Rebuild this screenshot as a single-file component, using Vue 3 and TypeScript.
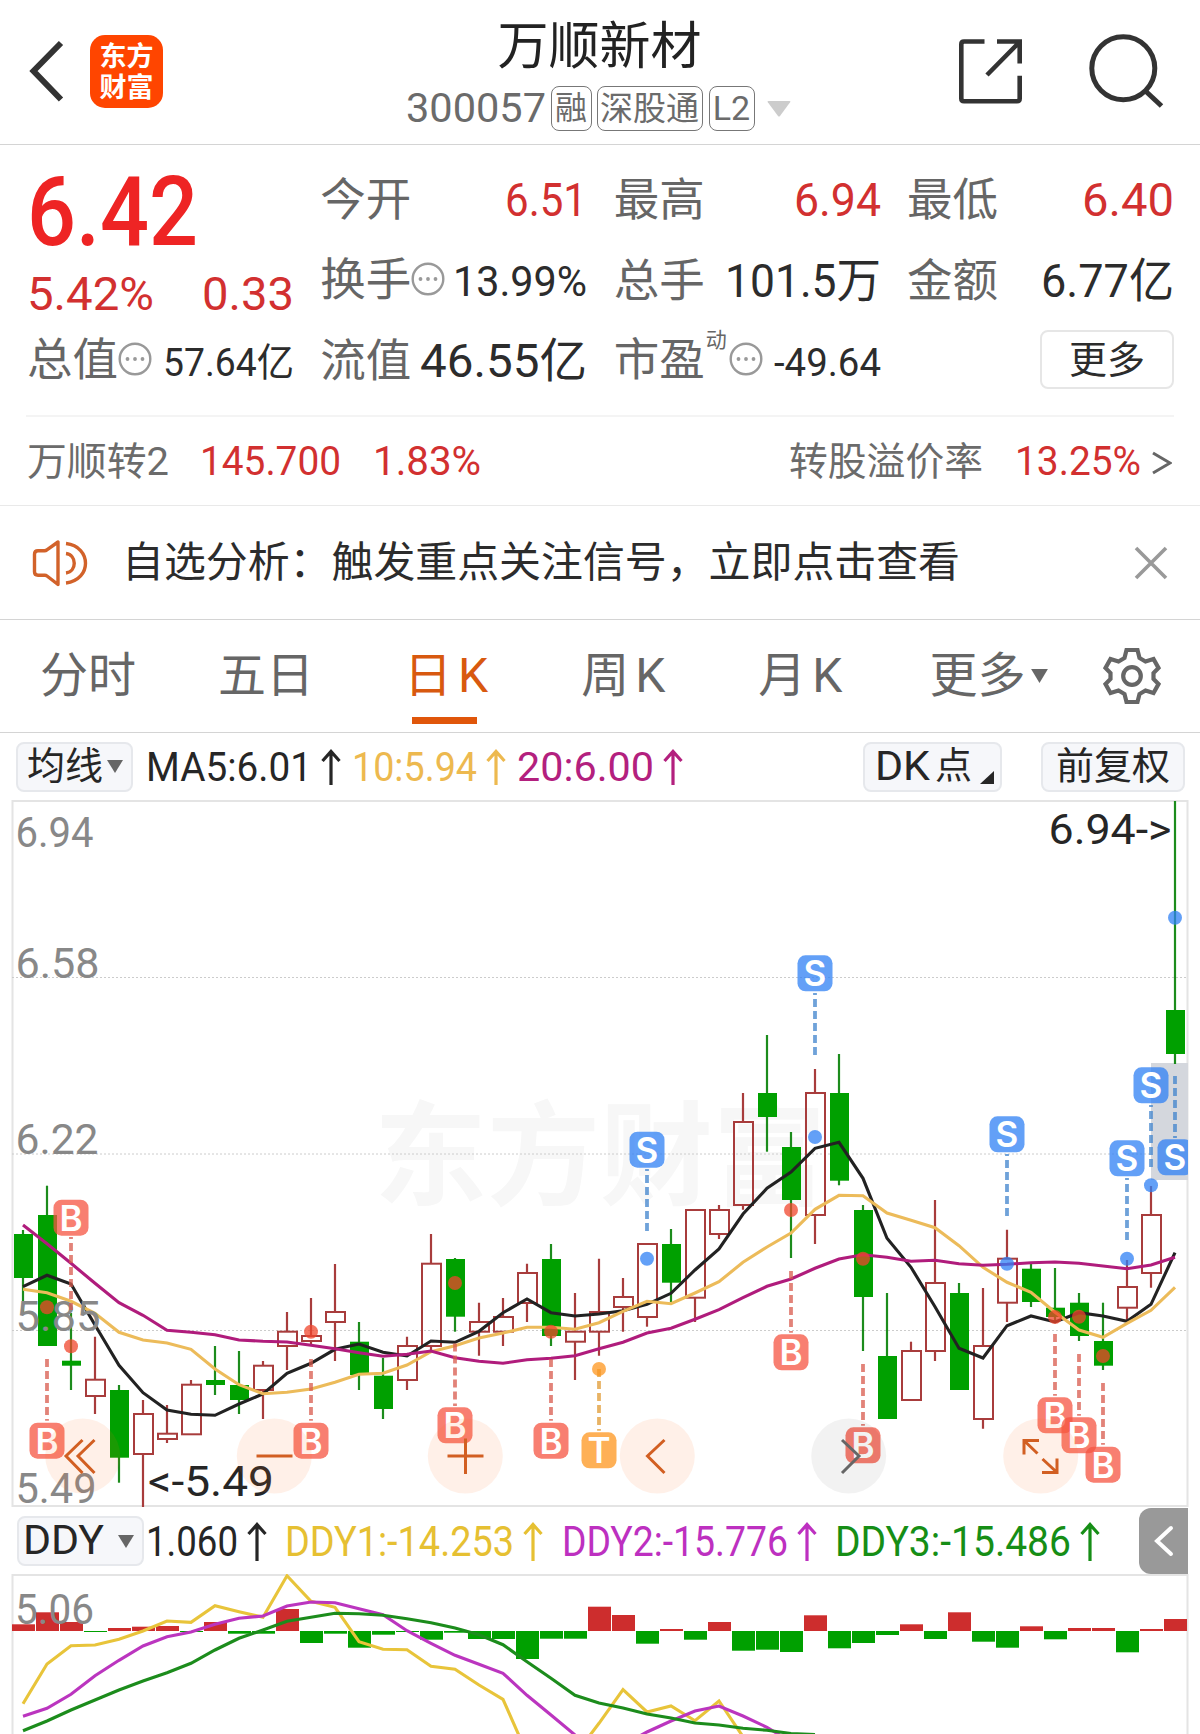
<script setup lang="ts">
import type { Directive } from 'vue'

/* Condenses or widens a run of text horizontally to a fixed advance width. */
const vFit: Directive<HTMLElement, number> = {
  mounted(el, { value }) {
    const natural = el.getBoundingClientRect().width
    if (!natural) return
    el.style.transformOrigin = '0 50%'
    el.style.transform = `scaleX(${value / natural})`
    el.style.marginRight = `${value - natural}px`
  },
}

type Side = 'up' | 'down'
interface Candle { side: Side; high: number; top: number; bottom: number; low: number; x: number }
interface Marker { kind: 'B' | 'S' | 'T'; i: number; y: number; from: number; to: number; dot: number }

const px = (i: number) => 23 + i * 24

const raw: [Side, number, number, number, number][] = [
  ['down', 1230, 1234, 1278, 1313], ['down', 1185.7, 1215, 1346, 1346], ['down', 1313, 1360.7, 1365.7, 1390],
  ['up', 1336.7, 1379.7, 1396, 1414], ['down', 1385, 1390, 1457.7, 1482.7], ['up', 1400, 1414, 1454, 1507],
  ['up', 1405, 1433.7, 1439, 1443], ['up', 1380, 1384.7, 1434.3, 1434.3], ['down', 1346, 1380, 1385, 1395],
  ['down', 1351, 1385, 1400, 1414], ['up', 1361, 1365.7, 1390, 1419], ['up', 1312, 1331.7, 1346, 1370],
  ['up', 1298, 1336, 1341, 1344], ['up', 1264, 1312, 1322, 1361], ['down', 1322, 1341.7, 1375, 1390],
  ['down', 1358, 1375.7, 1409, 1419], ['up', 1336.7, 1346, 1380, 1390], ['up', 1234, 1263.7, 1346, 1351],
  ['down', 1258, 1259, 1316.7, 1331.7], ['up', 1302.7, 1322, 1331.7, 1355.7], ['up', 1298, 1317, 1331.7, 1346],
  ['up', 1263.7, 1273, 1303, 1322], ['down', 1244, 1259, 1336, 1346], ['up', 1293, 1331.7, 1341.7, 1380],
  ['up', 1258.7, 1312, 1331.7, 1355.7], ['up', 1278, 1297, 1307, 1331.7], ['up', 1244, 1244, 1317, 1326.7],
  ['down', 1229, 1244, 1282.7, 1302], ['up', 1210, 1210, 1297.7, 1322], ['up', 1205, 1210, 1234, 1239],
  ['up', 1093, 1122, 1205, 1209.7], ['down', 1035, 1093, 1117, 1151.7], ['down', 1132, 1147, 1200, 1258],
  ['up', 1069, 1093, 1215, 1244], ['down', 1054, 1093, 1180.7, 1185.3], ['down', 1205, 1210, 1297, 1351],
  ['down', 1293, 1356, 1419, 1419], ['up', 1341.7, 1351, 1400, 1400], ['up', 1200, 1283, 1351, 1361],
  ['down', 1283, 1293, 1390, 1390], ['up', 1288, 1346, 1419, 1428.7], ['up', 1229.7, 1258.7, 1302.7, 1322],
  ['down', 1263, 1268.7, 1302, 1307], ['down', 1268, 1307.7, 1317, 1323], ['down', 1293, 1302.7, 1336, 1341],
  ['down', 1302.7, 1341, 1365.7, 1370], ['up', 1260, 1287, 1307.7, 1320], ['up', 1186, 1215, 1273, 1287.7],
  ['down', 801, 1010, 1054, 1064],
]
const candles: Candle[] = raw.map(([side, high, top, bottom, low], i) => ({ side, high, top, bottom, low, x: px(i) }))

const line = (ys: number[], start = 0) => ys.map((y, i) => `${px(i + start)},${y}`).join(' ')

const ma5 = line([1286.7, 1275.3, 1284, 1325, 1365.3, 1392.7, 1410, 1414.3, 1415.3, 1404, 1394, 1373.3, 1363.3, 1349.3, 1344, 1352.3, 1356, 1341, 1342.3, 1331.3, 1312.7, 1299, 1312.7, 1316, 1314, 1310.7, 1304.3, 1293.3, 1270, 1249, 1214, 1188.3, 1172, 1148.3, 1142.3, 1178.3, 1238.3, 1267.3, 1306.7, 1348.3, 1358, 1325.7, 1316, 1322, 1312.7, 1316, 1321.3, 1304.3, 1252.7])
const ma10 = line([1289.3, 1292.7, 1301.3, 1313.3, 1332.3, 1340, 1343, 1349.3, 1369, 1384.7, 1393.7, 1392.3, 1389, 1382.3, 1374.3, 1373.3, 1365, 1351.7, 1345.7, 1338, 1333, 1327.3, 1327.3, 1329.3, 1322.7, 1311.3, 1301.3, 1303.7, 1293, 1281.7, 1262.3, 1247, 1233, 1209.3, 1195.3, 1195.7, 1213, 1220.3, 1227.7, 1245.7, 1267.3, 1282.3, 1292.3, 1312.3, 1330, 1337.3, 1323.3, 1310.3, 1287.3])
const ma20 = line([1225, 1243.7, 1263.3, 1283.3, 1302.7, 1315.3, 1330.3, 1332.3, 1334.7, 1340, 1341.3, 1342, 1345.3, 1348.7, 1352.7, 1356.3, 1354.3, 1351, 1357.7, 1361.3, 1363.3, 1359.7, 1358.3, 1355.7, 1348.7, 1342.3, 1333, 1328.3, 1319.3, 1309.7, 1297.7, 1286.3, 1279, 1268.3, 1259, 1254.7, 1257.3, 1261.3, 1260.3, 1263.7, 1265.3, 1264.3, 1262.7, 1262, 1263.3, 1266, 1268.7, 1265, 1257.3])

const markers: Marker[] = [
  { kind: 'B', i: 2, y: 1217.7, from: 1237, to: 1310, dot: 1346.3 },
  { kind: 'B', i: 1, y: 1440.7, from: 1359, to: 1420.7, dot: 1307.3 },
  { kind: 'B', i: 12, y: 1440.7, from: 1359, to: 1420.7, dot: 1331.7 },
  { kind: 'B', i: 18, y: 1425.3, from: 1343.5, to: 1406, dot: 1283 },
  { kind: 'B', i: 22, y: 1440.7, from: 1359, to: 1420.7, dot: 1331.7 },
  { kind: 'T', i: 24, y: 1450.3, from: 1369, to: 1430.7, dot: 1369 },
  { kind: 'S', i: 26, y: 1149.7, from: 1169, to: 1231, dot: 1258.7 },
  { kind: 'B', i: 32, y: 1352.3, from: 1271, to: 1332.7, dot: 1210 },
  { kind: 'S', i: 33, y: 973.3, from: 993, to: 1055, dot: 1137 },
  { kind: 'B', i: 35, y: 1445.3, from: 1364, to: 1425.7, dot: 1258.7 },
  { kind: 'S', i: 41, y: 1134.3, from: 1154, to: 1216, dot: 1263.7 },
  { kind: 'B', i: 43, y: 1415.3, from: 1334, to: 1395.7, dot: 1317 },
  { kind: 'B', i: 44, y: 1435.3, from: 1354, to: 1415.7, dot: 1316.7 },
  { kind: 'B', i: 45, y: 1464.7, from: 1383, to: 1444.7, dot: 1356 },
  { kind: 'S', i: 46, y: 1158.3, from: 1178, to: 1240, dot: 1258.7 },
  { kind: 'S', i: 47, y: 1085.3, from: 1105, to: 1167, dot: 1185.3 },
  { kind: 'S', i: 48, y: 1157.3, from: 1076, to: 1138, dot: 917.7 },
]
/* Dashes are laid out starting from the candle side for markers below it, and from the badge for those above. */
const dashOffset = (m: Marker) => (m.y < m.from ? 6 : 0)

const axis = [
  { t: '6.94', y: 846.5, w: 78 }, { t: '6.58', y: 978, w: 84 }, { t: '6.22', y: 1153.5, w: 83 },
  { t: '5.85', y: 1331, w: 85 }, { t: '5.49', y: 1502.5, w: 81 },
]
const rounds = [
  { x: 82.7, off: false, d: 'M82.5 1440 66 1456l16.500 17M94.500 1440 78 1456l16.500 17' },
  { x: 274.3, off: false, d: 'M256.500 1456h36' },
  { x: 465.3, off: false, d: 'M447.500 1456h36M465.500 1438.500v35.500' },
  { x: 657.3, off: false, d: 'M664.500 1440 647.500 1456l17 17' },
  { x: 848.7, off: true, d: 'M842 1440l17 16-17 17' },
  { x: 1040.7, off: false, d: 'M1039 1440.500h-15v14M1024.500 1441l13 12.500M1042 1472.500h15v-14M1056.500 1472l-14-13' },
]

const zero = 1631
const ends = [1624.3, 1612.3, 1622, 1632, 1628, 1626.7, 1626, 1632, 1622, 1633.7, 1633.7, 1609, 1643, 1633.7, 1647.7, 1634.7, 1632, 1639.7, 1632.7, 1639, 1639, 1659, 1638.7, 1638.7, 1606.7, 1615, 1643.7, 1629, 1639.7, 1622, 1650.7, 1649.7, 1652, 1615.3, 1648.3, 1643, 1635, 1624.3, 1639, 1612.3, 1641.7, 1647.7, 1626.3, 1639.3, 1628, 1628, 1652.3, 1629, 1619]
const bars = ends.map((e, i) => ({ x: 12 + i * 24, y: Math.min(e, zero), h: Math.abs(e - zero), red: e < zero }))

const ddy1a = line([1703.7, 1664, 1645.7, 1645, 1639.3, 1631, 1621, 1622.3, 1605.7, 1611.7, 1617.3, 1575.8, 1601.3, 1607.3, 1641.7, 1649.3, 1649.7, 1666.3, 1669.3, 1685, 1699.3, 1753.7])
const ddy1b = line([1755, 1723.3, 1689.7, 1712, 1706, 1720.7, 1701, 1736.7], 23)
const ddy2a = line([1716.3, 1708.3, 1694.3, 1675.7, 1660.3, 1646, 1636.7, 1632, 1624.3, 1618.3, 1616, 1606, 1602, 1602.7, 1608.7, 1614.7, 1630.7, 1643.3, 1655.3, 1664.3, 1673.3, 1695.3, 1715, 1735])
const ddy2b = line([1745, 1732, 1721, 1711, 1706, 1716, 1727.3, 1742], 25)
const ddy3 = line([1730.7, 1721, 1710, 1700, 1690, 1681, 1672.7, 1663.3, 1650, 1638.3, 1630, 1621.3, 1617.3, 1613.3, 1613.7, 1615.3, 1618.7, 1622.7, 1628, 1634.7, 1644.7, 1661.7, 1678.3, 1695.3, 1703, 1708, 1714, 1718, 1723, 1725, 1728.3, 1730.3, 1733.5, 1734.5])
</script>

<template>
  <main class="app">
    <header class="head">
      <div class="head-left">
        <svg class="back" width="40" height="64" viewBox="0 0 40 64"><path d="M35 4 7.500 32 35 60.500" /></svg>
        <div class="logo"><span>东方</span><span>财富</span></div>
      </div>
      <div class="head-mid">
        <h1>万顺新材</h1>
        <div class="code-row">
          <span v-fit="140" class="code">300057</span>
          <span class="badge b1">融</span>
          <span class="badge b3">深股通</span>
          <span class="badge b2">L2</span>
          <svg class="caret" width="24" height="16" viewBox="0 0 24 16"><path d="M1.500 0h21q1.500 0 .6 1.300L13 15q-1 1.200-2 0L.8 1.300Q0 0 1.500 0z" fill="#ccc" /></svg>
        </div>
      </div>
      <div class="head-right">
        <svg width="66" height="66" viewBox="958 39 66 66" class="ico"><path d="M984.500 42.500H964q-2.700 0-2.700 2.700v54.300q0 2.700 2.700 2.700h53q2.700 0 2.700-2.700V76.700M997 42.500h22.700v22M987 76l32.500-33" /></svg>
        <svg width="78" height="78" viewBox="1088 32 78 78" class="ico"><circle cx="1123.300" cy="68.300" r="31.500" /><path d="M1145.500 91l16 15" /></svg>
      </div>
    </header>

    <section class="quote">
      <div class="col">
        <div v-fit="171" class="price">6.42</div>
        <div class="cell chg"><span v-fit="127" class="v red">5.42%</span><span v-fit="92" class="v red">0.33</span></div>
        <div class="cell"><span class="lab">总值</span><svg class="dots" width="34" height="34" viewBox="0 0 34 34"><circle cx="17" cy="17" r="15.300" /><path d="M9.500 17h.01M17 17h.01M24.500 17h.01" /></svg><span v-fit="131" class="v sm">57.64亿</span></div>
      </div>
      <div class="col pad">
        <div class="cell"><span class="lab">今开</span><span v-fit="82" class="v red">6.51</span></div>
        <div class="cell"><span class="lab">换手</span><svg class="dots" width="34" height="34" viewBox="0 0 34 34"><circle cx="17" cy="17" r="15.300" /><path d="M9.500 17h.01M17 17h.01M24.500 17h.01" /></svg><span v-fit="134" class="v md wide">13.99%</span></div>
        <div class="cell"><span class="lab">流值</span><span v-fit="167" class="v">46.55亿</span></div>
      </div>
      <div class="col pad">
        <div class="cell"><span class="lab">最高</span><span v-fit="87" class="v red">6.94</span></div>
        <div class="cell"><span class="lab">总手</span><span v-fit="156" class="v">101.5万</span></div>
        <div class="cell"><span class="lab">市盈<sup>动</sup></span><svg class="dots" width="34" height="34" viewBox="0 0 34 34"><circle cx="17" cy="17" r="15.300" /><path d="M9.500 17h.01M17 17h.01M24.500 17h.01" /></svg><span v-fit="107" class="v sm">-49.64</span></div>
      </div>
      <div class="col pad">
        <div class="cell"><span class="lab">最低</span><span v-fit="92" class="v red">6.40</span></div>
        <div class="cell"><span class="lab">金额</span><span v-fit="133" class="v">6.77亿</span></div>
        <div class="more"><button>更多</button></div>
      </div>
    </section>

    <section class="bond">
      <span v-fit="142" class="gray">万顺转2</span>
      <span v-fit="141" class="red bond-p">145.700</span>
      <span v-fit="108" class="red bond-c">1.83%</span>
      <span v-fit="194" class="gray bond-r">转股溢价率</span>
      <span v-fit="126" class="red bond-v">13.25%</span>
      <svg class="gt" width="20" height="24" viewBox="0 0 20 24"><path d="M1 2l17 10L1 22" /></svg>
    </section>

    <section class="notice">
      <svg width="58" height="50" viewBox="31 537 58 50" class="speaker"><path d="M58 541v42.500L47 575q-1-.8-2.200-.8H38q-3.500 0-3.500-3.500v-17.500q0-3.500 3.500-3.500h6.500q1.400 0 2.400-.8zM66 552.500c11 1.500 11 18 0 19.500M66 542.500c26 3 26 36.500 0 39.500" /></svg>
      <p v-fit="838">自选分析：触发重点关注信号，立即点击查看</p>
      <svg class="close" width="34" height="34" viewBox="0 0 34 34"><path d="M2 2l30 30M32 2 2 32" /></svg>
    </section>

    <nav class="tabs">
      <span class="t1">分时</span>
      <span class="t2">五日</span>
      <span class="t3 on">日<b>K</b></span>
      <span class="t4">周<b>K</b></span>
      <span class="t4">月<b>K</b></span>
      <span class="t5">更多<svg width="17" height="14" viewBox="0 0 18 15"><path d="M0 0h18L9 15z" fill="#666" /></svg></span>
      <svg class="gear" width="60" height="60" viewBox="-30 -30 60 60"><path d="M-5.500-26h11l2 8 6 3.500 8-2.500 5 9-5 5v6l5 5-5 9-8-2.500-6 3.500-2 8h-11l-2-8-6-3.500-8 2.500-5-9 5-5v-6l-5-5 5-9 8 2.500 6-3.500z" /><circle r="8.800" /></svg>
    </nav>

    <section class="ind">
      <button class="chip c1">均线<svg width="16" height="13" viewBox="0 0 16 13"><path d="M0 0h16L8 13z" fill="#666" /></svg></button>
      <span v-fit="166" class="ma k">MA5:6.01</span>
      <svg class="arr k" width="20" height="36" viewBox="0 0 20 36"><path d="M10 36V3M1.500 12 10 2.500 18.500 12" /></svg>
      <span v-fit="125" class="ma y g1">10:5.94</span>
      <svg class="arr y" width="20" height="36" viewBox="0 0 20 36"><path d="M10 36V3M1.500 12 10 2.500 18.500 12" /></svg>
      <span v-fit="137" class="ma m g1">20:6.00</span>
      <svg class="arr m" width="20" height="36" viewBox="0 0 20 36"><path d="M10 36V3M1.500 12 10 2.500 18.500 12" /></svg>
      <button class="chip c2"><span v-fit="55">DK</span><span class="pt">点</span><svg width="14" height="13" viewBox="0 0 14 13"><path d="M14 0v13H0z" fill="#262626" /></svg></button>
      <button class="chip c3">前复权</button>
    </section>

    <svg class="chart" width="1200" height="708" viewBox="0 800 1200 708">
      <g class="water"><text x="374" y="1196" textLength="452">东方财富</text></g>
      <path class="frame" d="M12.500 801H1187.500V1506H12.500z" />
      <path class="grid" d="M12 977.500H1187M12 1154H1187M12 1330.500H1187" />
      <rect x="1151" y="1063" width="37" height="117" fill="#d4d7dd" />
      <g v-for="(c, i) in candles" :key="i" :class="c.side">
        <path v-if="c.side === 'down'" :d="`M${c.x} ${c.high}V${c.low}`" />
        <path v-else :d="`M${c.x} ${c.high}V${c.top}M${c.x} ${c.bottom}V${c.low}`" />
        <rect v-if="c.side === 'down'" :x="c.x - 9" :y="c.top" width="19" :height="c.bottom - c.top" />
        <rect v-else :x="c.x - 9" :y="c.top" width="19" :height="c.bottom - c.top" />
      </g>
      <polyline :points="ma5" class="ln" stroke="#222" />
      <polyline :points="ma10" class="ln" stroke="#ecbb5a" />
      <polyline :points="ma20" class="ln" stroke="#b01c7c" />
      <g class="axis"><text v-for="a in axis" :key="a.t" x="15.500" :y="a.y" :textLength="a.w" lengthAdjust="spacingAndGlyphs">{{ a.t }}</text></g>
      <g class="extreme">
        <text x="148" y="1496" textLength="126" lengthAdjust="spacingAndGlyphs">&lt;-5.49</text>
        <text x="1048.500" y="844" textLength="123" lengthAdjust="spacingAndGlyphs">6.94-&gt;</text>
      </g>
      <clipPath id="plot"><rect x="12" y="800" width="1176" height="708" /></clipPath>
      <g clip-path="url(#plot)">
        <g v-for="m in markers" :key="m.i" :class="['mk', m.kind]">
          <path :d="`M${px(m.i)} ${m.from}V${m.to}`" :stroke-dashoffset="dashOffset(m)" />
          <circle :cx="px(m.i)" :cy="m.dot" r="7" />
          <rect :x="px(m.i) - 17.500" :y="m.y - 18" width="35" height="36" rx="8" />
          <text :x="px(m.i)" :y="m.y + 13">{{ m.kind }}</text>
        </g>
      </g>
      <g v-for="r in rounds" :key="r.x" :class="['round', { off: r.off }]">
        <circle :cx="r.x" cy="1456" r="37.500" />
        <path :d="r.d" />
      </g>
    </svg>

    <section class="ddy">
      <button class="chip c4"><span v-fit="81">DDY</span><svg width="16" height="13" viewBox="0 0 16 13"><path d="M0 0h16L8 13z" fill="#666" /></svg></button>
      <span v-fit="92" class="dv k">1.060</span>
      <svg class="arr k" width="20" height="39" viewBox="0 0 20 39"><path d="M10 39V3M1.500 12 10 2.500 18.500 12" /></svg>
      <span v-fit="229" class="dv dy">DDY1:-14.253</span>
      <svg class="arr dy" width="20" height="39" viewBox="0 0 20 39"><path d="M10 39V3M1.500 12 10 2.500 18.500 12" /></svg>
      <span v-fit="226" class="dv dp">DDY2:-15.776</span>
      <svg class="arr dp" width="20" height="39" viewBox="0 0 20 39"><path d="M10 39V3M1.500 12 10 2.500 18.500 12" /></svg>
      <span v-fit="236" class="dv dg">DDY3:-15.486</span>
      <svg class="arr dg" width="20" height="39" viewBox="0 0 20 39"><path d="M10 39V3M1.500 12 10 2.500 18.500 12" /></svg>
      <div class="handle"><svg width="20" height="32" viewBox="0 0 20 32"><path d="M17 3 3 16l14 13" /></svg></div>
    </section>

    <svg class="chart sub" width="1200" height="160" viewBox="0 1574 1200 160">
      <path class="frame" d="M12.500 1760V1575H1187.500V1760" />
      <rect v-for="(b, i) in bars" :key="i" :x="b.x" :y="b.y" width="23" :height="b.h" :fill="b.red ? '#cd2d2d' : '#00a000'" />
      <polyline :points="ddy1a" class="ln" stroke="#e8c43a" />
      <polyline :points="ddy1b" class="ln" stroke="#e8c43a" />
      <polyline :points="ddy2a" class="ln" stroke="#bb35bf" />
      <polyline :points="ddy2b" class="ln" stroke="#bb35bf" />
      <polyline :points="ddy3" class="ln" stroke="#1c8c1c" />
      <g class="axis"><text x="15" y="1623.500" textLength="79" lengthAdjust="spacingAndGlyphs">5.06</text></g>
    </svg>
  </main>
</template>

<style>
html,
body {
  background: #fff;
  overflow: hidden;
}
</style>

<style scoped>
.app {
  width: 1200px;
  height: 1734px;
  overflow: hidden;
  background: #fff;
  color: #2c2c2c;
  font-family: Roboto, 'Noto Sans CJK SC', sans-serif;
  line-height: 1;
  white-space: nowrap;
}
svg { display: block; flex: none; fill: none; }
span, p { flex: none; }
button { font: inherit; color: inherit; line-height: 1; padding: 0; }
.red { color: #d23030; }
.gray { color: #6b6b6b; }

.head {
  box-sizing: border-box;
  height: 145px;
  border-bottom: 1px solid #d4d4d4;
  display: grid;
  grid-template-columns: 396px 404px 400px;
}
.head-left { display: flex; align-items: flex-start; padding-left: 26px; }
.back { margin-top: 39px; stroke: #333; stroke-width: 6; }
.logo {
  width: 73px;
  height: 73px;
  margin: 35px 0 0 24px;
  box-sizing: border-box;
  padding-top: 4px;
  border-radius: 15px;
  background: #ff4500;
  color: #fff;
  font-family: 'Noto Sans CJK SC', sans-serif;
  font-weight: 700;
  font-size: 27px;
  line-height: 31px;
  display: flex;
  flex-direction: column;
  align-items: center;
}
.head-mid { display: flex; flex-direction: column; align-items: center; }
h1 { margin: 17px 0 9px 3px; font-size: 51px; line-height: 60px; font-weight: 400; color: #222; }
.code-row { display: flex; align-items: center; height: 45px; color: #6b6b6b; }
.code { font-size: 41px; line-height: 47px; }
.badge {
  box-sizing: border-box;
  height: 45px;
  border: 1px solid #777;
  border-radius: 8px;
  line-height: 43px;
  text-align: center;
  font-size: 32px;
}
.b1 { width: 41px; margin-left: 5px; }
.b3 { width: 106px; margin-left: 5px; font-size: 33px; }
.b2 { width: 46px; margin-left: 6px; font-size: 34px; }
.caret { margin: 0 0 0 12px; }
.head-right { display: flex; align-items: flex-start; padding-left: 158px; }
.ico { stroke: #333; stroke-width: 4.6; margin-top: 38px; }
.ico + .ico { margin: 31.500px 0 0 64px; stroke-width: 5; }

.quote { display: flex; justify-content: space-between; padding: 0 26px 0 27px; height: 269px; }
.col { width: 267px; padding-top: 26px; }
.pad { padding-top: 14px; }
.price { width: max-content; height: 93px; font-size: 96px; line-height: 82px; font-weight: 500; color: #ee2424; }
.cell { display: flex; align-items: baseline; height: 80.7px; line-height: 82px; }
.cell .v { font-size: 47px; margin-left: auto; }
.cell .sm { font-size: 39px; }
.cell .md { font-size: 43px; }
.chg { height: 56.4px; line-height: 60px; }
.cell.chg .v:first-child { margin-left: 0; }
.lab { font-size: 45.5px; color: #666; }
sup { font-size: 21px; line-height: 0; vertical-align: 29px; margin: 0 2px 0 1px; }
.dots { stroke: #999; stroke-width: 2.4; margin-bottom: 5px; }
.dots path { stroke-width: 3.8; stroke-linecap: round; }
.more { display: flex; justify-content: flex-end; padding-top: 10px; }
.more button { width: 134px; height: 59px; font-size: 38px; line-height: 56px; background: #fff; border: 2px solid #e6e6e6; border-radius: 8px; }

.bond {
  display: flex;
  align-items: baseline;
  height: 91px;
  line-height: 95px;
  border-bottom: 1px solid #e9e9e9;
  padding: 0 28px 0 27px;
  font-size: 41px;
  background: linear-gradient(#f4f4f4, #f4f4f4) 26px 1px / 1148px 2px no-repeat;
}
.bond .gray { font-size: 39px; }
.bond-p { margin-left: 31px; }
.bond-c { margin-left: 32px; }
.bond-r { margin-left: auto; }
.bond-v { margin-left: 32px; }
.gt { margin-left: 11px; margin-bottom: 3px; stroke: #666; stroke-width: 3; }

.notice { display: flex; align-items: center; box-sizing: border-box; height: 114px; padding: 0 32px 0 31px; border-bottom: 1px solid #d4d4d4; }
.speaker { stroke: #d2622a; stroke-width: 3.4; stroke-linejoin: round; }
.notice p { margin: 0 0 0 33px; font-size: 42px; line-height: 61px; color: #2c2c2c; }
.close { margin-left: auto; stroke: #999; stroke-width: 3.6; }

.tabs { display: flex; align-items: center; box-sizing: border-box; height: 113px; border-bottom: 1px solid #d4d4d4; font-size: 48px; line-height: 114px; color: #666; padding-left: 40px; }
.tabs b { font-weight: 400; margin-left: 6px; }
.t2 { margin-left: 82px; }
.on { color: #d8590f; background: linear-gradient(#e0560a, #e0560a) 8px 98px / 65px 7px no-repeat; }
.t3 { margin-left: 90px; margin-right: 93px; }
.t4 { margin-right: 93px; }
.t5 { display: flex; align-items: center; margin-left: -6px; }
.t5 svg { margin-left: 6px; }
.gear { stroke: #666; stroke-width: 4.2; margin-left: 54px; }

.ind { display: flex; align-items: center; height: 67px; padding: 0 15px 0 16px; }
.chip { box-sizing: border-box; flex: none; border: 2px solid #e6e8ec; border-radius: 8px; background: #f6f7fa; display: flex; align-items: center; color: #262626; height: 50px; font-size: 38px; line-height: 47px; }
.c1 { width: 117px; padding-left: 9px; }
.c1 svg { margin-left: 4px; }
.c2 { width: 139px; margin-left: auto; padding-left: 10px; font-size: 40px; }
.c2 .pt { font-size: 37px; margin-left: 5px; }
.c2 svg { margin: 22px 0 0 8px; }
.c3 { width: 144px; margin-left: 39px; justify-content: center; }
.ma { font-size: 41px; line-height: 52px; margin-left: 13px; }
.g1.ma { margin-left: 11px; }
.arr { margin-left: 9px; stroke: currentColor; stroke-width: 3.2; }
.k { color: #262626; }
.y { color: #edb94f; }
.m { color: #b3207e; }

.chart { width: 1200px; }
.frame { stroke: #e4e4e4; stroke-width: 2; }
.grid { stroke: #ccc; stroke-width: 1; stroke-dasharray: 2 2; }
.water text { font: 700 113px 'Noto Sans CJK SC', sans-serif; fill: #f7f7f7; }
.down path { stroke: #1c8c1c; stroke-width: 2.2; }
.down rect { fill: #00a000; }
.up path { stroke: #a83c3c; stroke-width: 2.2; }
.up rect { stroke: #a83c3c; stroke-width: 2; }
.ln { fill: none; stroke-width: 3.1; }
.axis text { font-size: 43px; fill: #888; }
.extreme text { font-size: 42px; fill: #262626; }
.mk path { stroke-width: 3.8; stroke-dasharray: 8 4; opacity: .75; }
.mk circle, .mk rect { opacity: .75; }
.mk text { font: 600 35px Inter, sans-serif; fill: #fff; text-anchor: middle; }
.B path { stroke: #d85a4c; }
.B circle { fill: #f0452c; }
.B rect { fill: #f65442; }
.S path { stroke: #3f83cc; }
.S circle, .S rect { fill: #2f80f4; }
.T path { stroke: #e09a32; }
.T circle, .T rect { fill: #fd961e; }
.round circle { fill: #ff6a1c; fill-opacity: .1; }
.round path { stroke: #d25f22; stroke-width: 3; }
.off circle { fill: #000; fill-opacity: .05; }
.off path { stroke: #666; }

.ddy { display: flex; align-items: center; height: 66px; padding-left: 17px; }
.c4 { width: 127px; padding-left: 4px; font-size: 40px; line-height: 48px; }
.c4 svg { margin-left: 14px; }
.dv { font-size: 43px; line-height: 60px; }
.dv.k { margin-left: 2px; }
.ddy .arr { margin-left: 9px; }
.dv.dy { margin-left: 18px; }
.dv.dp { margin-left: 19px; }
.dv.dg { margin-left: 18px; }
.dy { color: #e6c032; }
.dp { color: #bd30c0; }
.dg { color: #168e16; }
.handle { margin: 0 12px 0 auto; width: 49px; height: 66px; background: #999; border-radius: 12px 0 0 12px; display: flex; align-items: center; justify-content: center; }
.handle svg { stroke: #fff; stroke-width: 4; stroke-linecap: round; }
</style>
